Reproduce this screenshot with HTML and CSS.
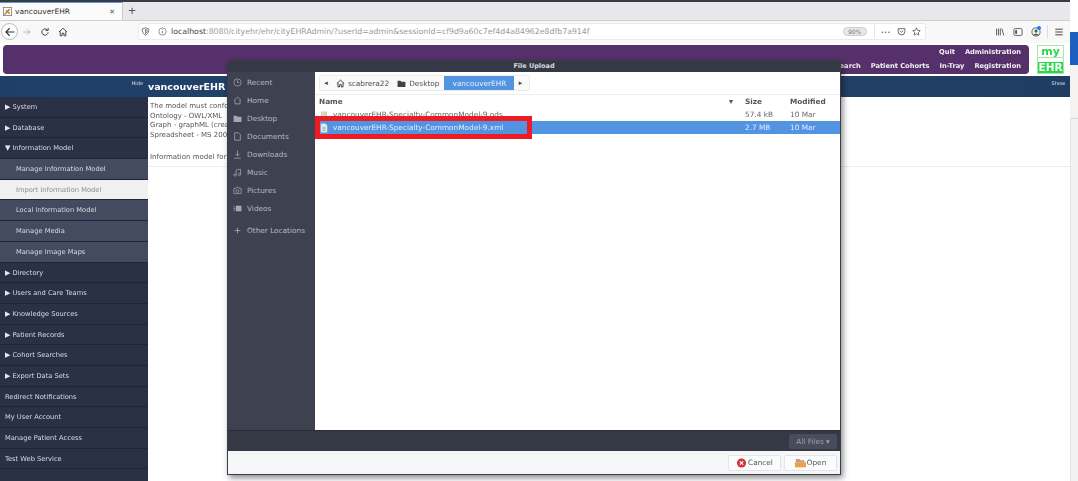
FILE: index.html
```html
<!DOCTYPE html>
<html lang="en">
<head>
<meta charset="utf-8">
<title>vancouverEHR</title>
<link rel="stylesheet" href="styles.css">
</head>
<body>
<div class="screen">
  <div class="browser">
    <div class="tabbar">
      <div class="tab">
        <svg class="favicon" viewBox="0 0 12 12"><rect x=".5" y=".5" width="11" height="11" fill="#fff" stroke="#777"/><path d="M2 10 9 3M4 4l5 5" stroke="#b8862c" stroke-width="2"/></svg>
        <span class="tab-title">vancouverEHR</span>
        <span class="tab-close">✕</span>
      </div>
      <span class="newtab">+</span>
    </div>
    <div class="navbar">
      <span class="back"><svg viewBox="0 0 16 16" width="12" height="12"><path d="M14 8H3M7.500 3 2.500 8l5 5" fill="none" stroke="#333" stroke-width="1.500"/></svg></span>
      <svg class="nav-ic" viewBox="0 0 16 16"><path d="M2 8h11M8.500 3.500 13 8l-4.500 4.500" fill="none" stroke="#aaa" stroke-width="1.300"/></svg>
      <svg class="nav-ic" viewBox="0 0 16 16"><path d="M13 8.500a5 5 0 1 1-1.700-4.200M13 1.500v4H9" fill="none" stroke="#333" stroke-width="1.500"/></svg>
      <svg class="nav-ic" viewBox="0 0 16 16"><path d="M1.500 8 8 2l6.500 6M3.500 7v7h3v-4h3v4h3V7" fill="none" stroke="#333" stroke-width="1.400"/></svg>
      <div class="urlbar">
        <svg class="url-ic shield" viewBox="0 0 16 16"><path d="M8 1.500 14 3.500c0 5-2 9-6 11-4-2-6-6-6-11zM8 4.500 11 5.500c0 3-1 5-3 6z" fill="none" stroke="#555" stroke-width="1.300"/></svg>
        <svg class="url-ic info" viewBox="0 0 16 16"><circle cx="8" cy="8" r="6.500" fill="none" stroke="#666" stroke-width="1.200"/><path d="M8 7v4.500M8 4.200v1.500" stroke="#666" stroke-width="1.400"/></svg>
        <span class="url"><b>localhost</b>:8080/cityehr/ehr/cityEHRAdmin/?userId=admin&amp;sessionId=cf9d9a60c7ef4d4a84962e8dfb7a914f</span>
        <span class="zoom-pill">90%</span>
        <span class="url-sep"></span>
        <span class="dots">•••</span>
        <svg class="url-ic" viewBox="0 0 16 16"><path d="M2 3h12v5a6 6 0 0 1-12 0zM5 6.500l3 3 3-3" fill="none" stroke="#444" stroke-width="1.400"/></svg>
        <svg class="url-ic" viewBox="0 0 16 16"><path d="m8 1.500 2 4.300 4.700.6-3.500 3.200.9 4.700L8 12l-4.100 2.300.9-4.700L1.300 6.400 6 5.800z" fill="none" stroke="#444" stroke-width="1.300"/></svg>
      </div>
      <div class="toolbar-right">
        <svg class="nav-ic" viewBox="0 0 16 16"><path d="M2.500 2.500v11M5.500 2.500v11M8.500 2.500v11M11 2.500l3 11" fill="none" stroke="#555" stroke-width="1.500"/></svg>
        <svg class="nav-ic" viewBox="0 0 16 16"><rect x="1.500" y="2.500" width="13" height="11" rx="2" fill="none" stroke="#555" stroke-width="1.400"/><path d="M3.500 5v6h3V5z" fill="#555"/></svg>
        <span class="account"><svg class="nav-ic" viewBox="0 0 16 16"><circle cx="8" cy="8" r="6.500" fill="none" stroke="#555" stroke-width="1.400"/><circle cx="8" cy="6.500" r="2.500" fill="#555"/><path d="M3.500 13c1-3 8-3 9 0z" fill="#555"/></svg><i class="dot"></i></span>
        <span class="tool-sep"></span>
        <svg class="nav-ic" viewBox="0 0 16 16"><path d="M2 3.500h12M2 8h12M2 12.500h12" fill="none" stroke="#444" stroke-width="1.600"/></svg>
      </div>
    </div>
  </div>

  <div class="page">
    <header class="topband">
      <div class="purple">
        <div class="menu-row">
          <span>Quit</span><span>Administration</span>
        </div>
        <div class="menu-row">
          <span>Search</span><span>Patient Cohorts</span><span>In-Tray</span><span>Registration</span>
        </div>
      </div>
      <div class="logo"><span class="logo-my">my</span><span class="logo-ehr">EHR</span></div>
    </header>
    <div class="bluebar">
      <span class="hide">Hide</span>
      <span class="brand">vancouverEHR</span>
      <span class="show">Show</span>
    </div>
    <div class="main">
      <nav class="sidebar">
        <a class="item"><i class="tri">▶</i>System</a>
        <a class="item"><i class="tri">▶</i>Database</a>
        <a class="item"><i class="tri">▼</i>Information Model</a>
        <a class="sub">Manage Information Model</a>
        <a class="sub current">Import Information Model</a>
        <a class="sub">Local Information Model</a>
        <a class="sub">Manage Media</a>
        <a class="sub">Manage Image Maps</a>
        <a class="item"><i class="tri">▶</i>Directory</a>
        <a class="item"><i class="tri">▶</i>Users and Care Teams</a>
        <a class="item"><i class="tri">▶</i>Knowledge Sources</a>
        <a class="item"><i class="tri">▶</i>Patient Records</a>
        <a class="item"><i class="tri">▶</i>Cohort Searches</a>
        <a class="item"><i class="tri">▶</i>Export Data Sets</a>
        <a class="item">Redirect Notifications</a>
        <a class="item">My User Account</a>
        <a class="item">Manage Patient Access</a>
        <a class="item">Test Web Service</a>
      </nav>
      <section class="content">
        <div class="intro">
          <p>The model must conform<br>Ontology - OWL/XML<br>Graph - graphML (create<br>Spreadsheet - MS 2003</p>
          <p class="gap">Information model for u</p>
        </div>
      </section>
    </div>
  </div>

  <div class="rail"><span class="rail-blue"></span><span class="rail-pale"></span><span class="rail-gray"></span></div>

  <div class="dialog">
    <div class="dlg-title">File Upload</div>
    <div class="dlg-body">
      <aside class="places">
        <div class="place"><svg viewBox="0 0 16 16"><circle cx="8" cy="8" r="6.500" fill="none" stroke="#a5a8b0" stroke-width="1.300"/><path d="M8 4v4.500h3" fill="none" stroke="#a5a8b0" stroke-width="1.300"/></svg>Recent</div>
        <div class="place"><svg viewBox="0 0 16 16"><path d="M1.500 8 8 2l6.500 6M3.500 7v7h9V7" fill="none" stroke="#a5a8b0" stroke-width="1.400"/></svg>Home</div>
        <div class="place"><svg viewBox="0 0 16 16"><path d="M1 3h5l2 2h7v9H1z" fill="#a5a8b0"/></svg>Desktop</div>
        <div class="place"><svg viewBox="0 0 16 16"><path d="M3 1.500h7l3 3v10H3z" fill="none" stroke="#a5a8b0" stroke-width="1.400"/></svg>Documents</div>
        <div class="place"><svg viewBox="0 0 16 16"><path d="M8 1v9M4 6.500 8 10.500l4-4M2 14.500h12" fill="none" stroke="#a5a8b0" stroke-width="1.400"/></svg>Downloads</div>
        <div class="place"><svg viewBox="0 0 16 16"><path d="M5.500 12V3.500l8-1.500v9" fill="none" stroke="#a5a8b0" stroke-width="1.300"/><circle cx="3.500" cy="12.500" r="2" fill="none" stroke="#a5a8b0" stroke-width="1.300"/><circle cx="11.500" cy="11.500" r="2" fill="none" stroke="#a5a8b0" stroke-width="1.300"/></svg>Music</div>
        <div class="place"><svg viewBox="0 0 16 16"><path d="M1.500 4.500h3l1-2h5l1 2h3v9h-13z" fill="none" stroke="#a5a8b0" stroke-width="1.300"/><circle cx="8" cy="9" r="2.500" fill="none" stroke="#a5a8b0" stroke-width="1.300"/></svg>Pictures</div>
        <div class="place"><svg viewBox="0 0 16 16"><rect x="5" y="3" width="10" height="10" fill="#a5a8b0"/><path d="M1 5h2.500M1 8h2.500M1 11h2.500" stroke="#a5a8b0" stroke-width="1.500"/></svg>Videos</div>
        <div class="place other"><svg viewBox="0 0 16 16"><path d="M8 3v10M3 8h10" stroke="#a5a8b0" stroke-width="1.500"/></svg>Other Locations</div>
      </aside>
      <div class="files">
        <div class="pathbar">
          <div class="crumbs">
            <span class="crumb arrow">◂</span>
            <span class="crumb"><svg viewBox="0 0 16 16"><path d="M1.500 8 8 2l6.500 6M3.500 7v7h3v-4h3v4h3V7" fill="none" stroke="#333" stroke-width="1.600"/></svg>scabrera22</span>
            <span class="crumb"><svg viewBox="0 0 16 16"><path d="M1 3h5l2 2h7v9H1z" fill="#444"/></svg>Desktop</span>
            <span class="crumb active">vancouverEHR</span>
            <span class="crumb arrow">▸</span>
          </div>
        </div>
        <div class="list-head">
          <span class="col-name">Name</span><span class="sort">▾</span>
          <span class="col-size">Size</span>
          <span class="col-mod">Modified</span>
        </div>
        <div class="row">
          <svg class="file-ic" viewBox="0 0 10 12"><path d="M1 1h8v10H1z" fill="#e9efe2"/><path d="M2 2v8M5 2v8" stroke="#dcb9a8" stroke-width="1.500"/><path d="M7.500 2v8" stroke="#a7c99a" stroke-width="1.500"/></svg>
          <span class="col-name">vancouverEHR-Specialty-CommonModel-9.ods</span>
          <span class="col-size">57.4 kB</span>
          <span class="col-mod">10 Mar</span>
        </div>
        <div class="row selected">
          <svg class="file-ic" viewBox="0 0 10 12"><path d="M1 .5h5.500L9 3v8.500H1z" fill="#eef1f5" stroke="#9aa" stroke-width=".6"/><path d="M3 5h4M3 7h4M3 9h4" stroke="#8a95a5"/></svg>
          <span class="col-name">vancouverEHR-Specialty-CommonModel-9.xml</span>
          <span class="col-size">2.7 MB</span>
          <span class="col-mod">10 Mar</span>
          <span class="highlight"></span>
        </div>
      </div>
    </div>
    <div class="filter-bar"><span class="filter">All Files <i>▾</i></span></div>
    <div class="dlg-actions">
      <span class="btn"><svg viewBox="0 0 12 12"><circle cx="6" cy="6" r="5.500" fill="#d0343c"/><path d="m4 4 4 4M8 4 4 8" stroke="#fff" stroke-width="1.500"/></svg>Cancel</span>
      <span class="btn"><svg viewBox="0 0 14 12"><path d="M1 1h5l1 1.500h5V5H1z" fill="#b9a584"/><path d="M0 5h14v6.500H0z" fill="#ef9f45"/></svg>Open</span>
    </div>
  </div>
</div>
</body>
</html>
```
FILE: styles.css
```css
* { box-sizing: border-box; }
html, body { margin: 0; padding: 0; }
body { background: #fff; font-family: "DejaVu Sans", sans-serif; overflow: hidden; }
.screen { position: relative; width: 1078px; height: 481px; overflow: hidden; display: flex; flex-direction: column; filter: blur(.35px); }

.browser { width: 1070px; flex: none; border-top: 2px solid #3a3c44; }
.tabbar { height: 19px; background: #e8e8ea; display: flex; align-items: stretch; border-bottom: 1px solid #cfcfd2; }
.tab { width: 123px; background: #fbfbfb; border-top: 1px solid #5a95e0; display: flex; align-items: center; padding: 0 7px 0 3px; color: #333; border-right: 1px solid #ccc; }
.favicon { width: 9px; height: 9px; margin-right: 3px; }
.tab-title { flex: 1; font-size: 7.500px; }
.tab-close { font-size: 7px; color: #555; }
.newtab { width: 18px; text-align: center; font: 13px/17px "Liberation Sans", sans-serif; color: #555; }

.navbar { height: 22px; background: #f8f8f9; display: flex; align-items: center; padding: 0 0 1px 1px; }
.back { width: 17px; height: 17px; border: 1px solid #bbb; border-radius: 50%; background: #fff; display: flex; align-items: center; justify-content: center; }
.nav-ic { width: 10px; height: 10px; margin: 0 4px; flex: none; }
.urlbar { margin-left: 66px; width: 788px; height: 17px; flex: none; background: #fff; border: 1px solid #eaeaec; border-radius: 2px; display: flex; align-items: center; padding: 0 3px 0 2px; font-size: 7.800px; color: #999; }
.url-ic { width: 9px; height: 9px; flex: none; margin-right: 6px; }
.url-ic:last-child { margin-right: 1px; }
.url-ic.shield { margin-right: 8px; }
.url-ic.info { margin-right: 4px; }
.url { flex: 1; white-space: nowrap; overflow: hidden; }
.url b { font-weight: normal; color: #444; }
.zoom-pill { width: 24px; height: 9px; border-radius: 5px; background: #e8e8ea; border: 1px solid #ccc; color: #777; font-size: 6px; line-height: 7px; text-align: center; margin-right: 7px; }
.url-sep { width: 1px; height: 13px; background: #e4e4e6; margin-right: 6px; }
.dots { font-size: 5px; color: #444; margin-right: 6px; letter-spacing: .5px; }
.toolbar-right { display: flex; align-items: center; margin-left: 65px; flex: 1; }
.account { position: relative; display: flex; }
.dot { position: absolute; top: -1px; right: 4px; width: 4px; height: 4px; border-radius: 50%; background: #0a84ff; }
.tool-sep { width: 1px; height: 13px; background: #ddd; margin: 0 2px; }

.page { width: 1070px; flex: 1; display: flex; flex-direction: column; min-height: 0; }
.topband { height: 33px; padding: 2px 6px 2px 3px; display: flex; flex: none; gap: 8px; }
.purple { flex: 1; background: #56306a; border-radius: 4px; display: flex; flex-direction: column; justify-content: center; gap: 4px; padding: 0 8px 0 0; color: #f2f2f2; font-size: 6.700px; font-weight: bold; }
.menu-row { display: flex; justify-content: flex-end; gap: 10px; height: 9.500px; line-height: 9.500px; }
.logo { width: 27px; background: #fff; border: 1px solid #a5e6b2; display: flex; flex-direction: column; align-items: center; font-weight: bold; color: #2bd64b; }
.logo-my { font-size: 11px; line-height: 11px; height: 13px; border-bottom: 1px solid #a5e6b2; width: 100%; text-align: center; }
.logo-ehr { margin-top: 4px; flex: 1; background: #2bd64b; color: #fff; width: 100%; text-align: center; font-size: 10.500px; line-height: 11px; }

.bluebar { height: 21px; flex: none; background: linear-gradient(90deg, #1f3f69 0, #264468 55%, #1f3c63 100%); display: flex; color: #dfe6ee; font-size: 5px; padding-right: 5px; }
.hide { width: 143px; text-align: right; padding-top: 4px; }
.brand { margin-left: 5px; font-size: 9.500px; font-weight: bold; color: #fff; line-height: 21px; flex: 1; }
.show { padding-top: 4px; }

.main { flex: 1; display: flex; min-height: 0; }
.sidebar { width: 148px; flex: none; background: #2a3147; display: flex; flex-direction: column; color: #d8dbe2; font-size: 6.700px; }
.sidebar a { display: block; height: 20.700px; line-height: 20px; white-space: nowrap; border-bottom: 1px solid #1f2537; }
.item { padding-left: 5px; }
.tri { font-style: normal; font-size: 7px; margin-right: 2px; color: #e8e8e8; }
.sub { padding-left: 16px; background: #444a5f; }
.sub.current { background: #f0f0f0; color: #888c98; border-bottom-color: #20263a; }
.content { flex: 1; font-size: 7px; line-height: 9.600px; color: #555; }
.intro { height: 70px; padding: 5px 0 0 2px; border-bottom: 1px solid #ececec; white-space: nowrap; overflow: hidden; }
.content p { margin: 0; }
.content .gap { margin-top: 13px; }

.rail { position: absolute; top: 0; right: 0; width: 8px; height: 481px; display: flex; flex-direction: column; background: #fff; }
.rail-blue { margin-top: 32px; height: 33px; flex: none; background: #1c5fc0; }
.rail-pale { height: 53px; flex: none; background: #f4f3f1; }
.rail-gray { flex: 1; background: #f2f2f2; border-top: 1px solid #d8d8d8; border-left: 1px solid #e4e4e4; }

.dialog { position: absolute; left: 227px; top: 60px; width: 614px; height: 415px; display: flex; flex-direction: column; background: #f5f6f7; border: 1px solid #3a3d48; box-shadow: 2px 3px 6px rgba(0,0,0,.45); font-size: 7.330px; }
.dlg-title { height: 11px; flex: none; background: #353945; color: #d8dade; font-weight: bold; font-size: 6.500px; line-height: 11px; text-align: center; }
.dlg-body { flex: 1; display: flex; min-height: 0; }
.places { width: 87px; flex: none; background: #3d4150; color: #b7bac2; padding: 1.500px 0 0 5px; }
.place { height: 18px; line-height: 18px; display: flex; align-items: center; gap: 5px; }
.place svg { width: 9px; height: 9px; }
.place.other { margin-top: 4px; }
.files { flex: 1; background: #fff; min-width: 0; }
.pathbar { height: 23px; border-bottom: 1px solid #eee; padding: 3px 0 0 4px; color: #4a4f58; }
.crumbs { width: 211px; height: 16px; display: flex; align-items: stretch; border: 1px solid #ececec; border-radius: 2px; background: #fafafa; }
.crumb { padding: 0 4px; display: flex; align-items: center; gap: 3px; white-space: nowrap; }
.crumb svg { width: 9px; height: 9px; }
.crumb.arrow { color: #444; width: 12px; padding: 0; justify-content: center; font-size: 7px; }
.crumb.active { background: #5294e2; color: #e8f0fa; width: 70px; justify-content: center; margin-left: 1px; }
.list-head { height: 13px; display: flex; align-items: center; padding-left: 4px; color: #555; font-weight: bold; }
.row { height: 13px; display: flex; align-items: center; padding-left: 5px; color: #666; position: relative; }
.file-ic { width: 8px; height: 10px; margin-right: 5px; flex: none; }
.col-name { width: 412px; white-space: nowrap; }
.list-head .col-name { width: 410px; }
.sort { width: 16px; font-weight: normal; font-size: 8px; }
.col-size { width: 45px; }
.col-mod { white-space: nowrap; }
.selected { background: #5294e2; color: #e4eefb; }
.highlight { position: absolute; left: 0; top: -5px; width: 217px; height: 23px; border: 5px solid #ed1c24; }
.filter-bar { height: 21px; flex: none; background: #353945; display: flex; justify-content: flex-end; align-items: center; padding-right: 3px; border-top: 1px solid #2b2e38; }
.filter { width: 48px; height: 15px; line-height: 15px; background: #484d5d; color: #9ea2ac; border-radius: 2px; text-align: center; }
.filter i { font-style: normal; }
.dlg-actions { height: 23px; flex: none; display: flex; justify-content: flex-end; align-items: center; gap: 3px; padding-right: 3px; color: #555; }
.btn { height: 16px; width: 53px; background: #fbfcfd; border: 1px solid #e3e5ea; border-radius: 2px; display: flex; align-items: center; justify-content: center; gap: 1px; }
.btn svg { width: 11px; height: 10px; }
```
